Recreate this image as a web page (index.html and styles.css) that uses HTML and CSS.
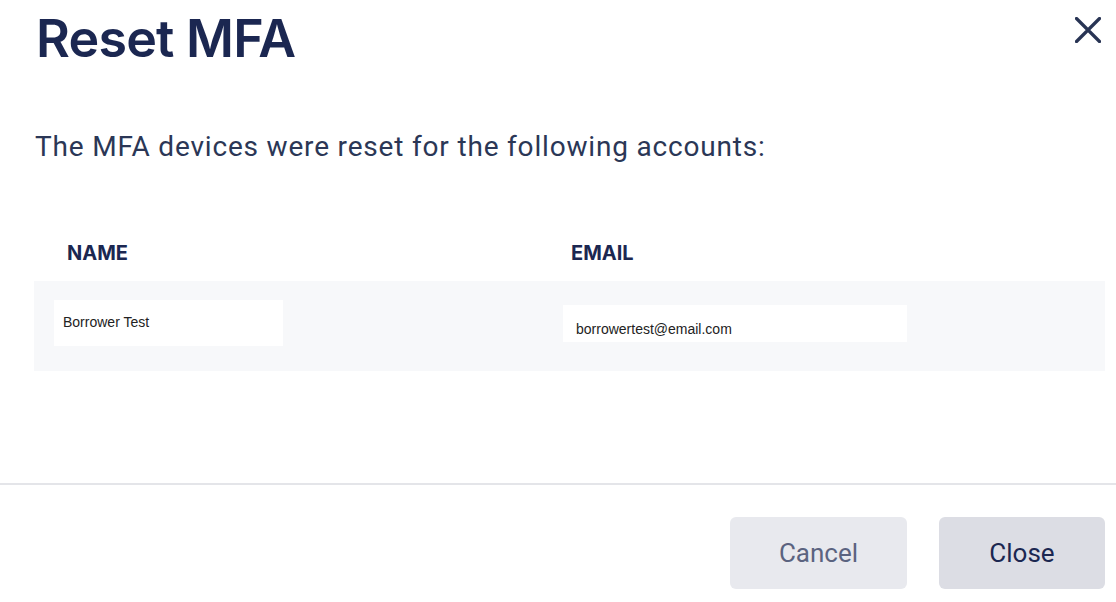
FILE: index.html
```html
<!DOCTYPE html>
<html lang="en">
<head>
<meta charset="utf-8">
<title>Reset MFA</title>
<link rel="stylesheet" href="styles.css">
</head>
<body>
<div class="dialog">
  <div class="header">
    <h1 class="title">Reset MFA</h1>
    <button class="close-x" aria-label="Close">
      <svg width="26" height="26" viewBox="0 0 26 26"><path d="M1.5 1.5 L24.5 24.5 M24.5 1.5 L1.5 24.5" stroke="#283454" stroke-width="3.2" stroke-linecap="round" fill="none"/></svg>
    </button>
  </div>
  <p class="message">The MFA devices were reset for the following accounts:</p>
  <div class="table">
    <div class="thead">
      <div class="th th-name">NAME</div>
      <div class="th th-email">EMAIL</div>
    </div>
    <div class="row">
      <div class="cell cell-name"><div class="box box-name">Borrower Test</div></div>
      <div class="cell cell-email"><div class="box box-email">borrowertest@email.com</div></div>
    </div>
  </div>
  <div class="footer">
    <button class="btn btn-cancel">Cancel</button>
    <button class="btn btn-close">Close</button>
  </div>
</div>
</body>
</html>
```
FILE: styles.css
```css
html, body {
  margin: 0;
  padding: 0;
  background: #ffffff;
}
.dialog {
  width: 1116px;
  height: 602px;
  display: flex;
  flex-direction: column;
  font-family: Roboto, "Liberation Sans", sans-serif;
}
.header {
  display: flex;
  justify-content: space-between;
  align-items: flex-start;
  padding: 6px 15px 0 36px;
}
.title {
  margin: 0;
  font-family: Inter, "Noto Sans", sans-serif;
  font-weight: 600;
  font-size: 52px;
  line-height: 66px;
  color: #1b2751;
  letter-spacing: -0.8px;
}
.close-x {
  margin-top: 11px;
  padding: 0;
  border: 0;
  background: none;
  width: 26px;
  height: 26px;
  display: flex;
}
.message {
  margin: 57px 0 0 35px;
  font-size: 28px;
  line-height: 36px;
  color: #2b3756;
  letter-spacing: 0.82px;
}
.table {
  margin: 76px 11px 0 34px;
}
.thead {
  display: grid;
  grid-template-columns: 504px 1fr;
  height: 40px;
}
.th {
  font-family: Inter, "Noto Sans", sans-serif;
  font-weight: 700;
  font-size: 20px;
  line-height: 24px;
  color: #1b2751;
}
.th-name { padding-left: 33px; }
.th-email { padding-left: 33px; }
.row {
  display: grid;
  grid-template-columns: 504px 1fr;
  height: 90px;
  background: #f7f8fa;
  align-items: center;
}
.cell-name { padding-left: 20px; }
.cell-email { padding-left: 25px; }
.box {
  background: #ffffff;
  font-family: "Liberation Sans", Arial, sans-serif;
  font-size: 14px;
  color: #222222;
  box-sizing: border-box;
}
.box-name {
  width: 229px;
  height: 46px;
  padding: 14px 0 0 9px;
  margin-top: -6px;
}
.box-email {
  width: 344px;
  height: 37px;
  padding: 16px 0 0 13px;
  margin-top: -5px;
}
.footer {
  margin-top: auto;
  border-top: 2px solid #e4e5e9;
  display: flex;
  justify-content: flex-end;
  gap: 32px;
  padding: 32px 11px 13px 0;
}
.btn {
  border: 0;
  border-radius: 6px;
  height: 72px;
  font-family: Roboto, "Liberation Sans", sans-serif;
  font-size: 26px;
  padding: 0;
}
.btn-cancel {
  width: 177px;
  background: #e8e9ee;
  color: #5b6380;
}
.btn-close {
  width: 166px;
  background: #dcdde4;
  color: #1b2751;
}
```
